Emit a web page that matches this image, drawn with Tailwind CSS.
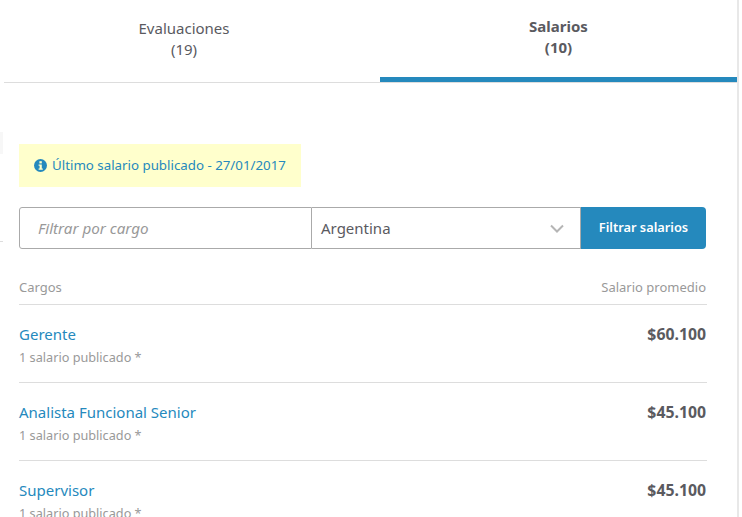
<!DOCTYPE html>
<html lang="es">
<head>
  <meta charset="UTF-8">
  <title>Salarios</title>
  <script src="https://cdn.jsdelivr.net/npm/@tailwindcss/browser@4"></script>
</head>
<body class="bg-white overflow-hidden font-['Noto_Sans',sans-serif] text-[#5a5a5f]">

<div class="relative w-[742px] h-[517px] overflow-hidden">
  <!-- restos de la columna vecina -->
  <div class="absolute left-0 top-[132px] w-[3px] h-[22px] bg-[#f7f7f7]"></div>
  <div class="absolute left-0 top-[241px] w-[3px] h-px bg-[#dddddd]"></div>

  <div class="w-[739px] h-[517px] border-r-2 border-[#e8e8e8]">
    <!-- tabs -->
    <div class="ml-[4px] flex h-[83px] border-b border-[#dddddd] text-[15px] leading-[21px] text-center">
      <div class="w-[360px] mr-[16px] pt-[18px]">Evaluaciones<br>(19)</div>
      <div class="w-[357px] h-[82px] pt-[16px] font-bold border-b-[5px] border-[#2589bd]">Salarios<br>(10)</div>
    </div>

    <div class="pl-[19px] pr-[30px]">
      <!-- aviso -->
      <div class="mt-[61px] w-[282px] h-[43px] bg-[#ffffcc] flex items-center pl-[15px] text-[13.3px] text-[#2589bd]">
        <svg class="w-[13px] h-[13px] mr-[5px] shrink-0 -mt-[1px]" viewBox="0 0 13 13">
          <circle cx="6.5" cy="6.5" r="6.5" fill="#2589bd"/>
          <rect x="5.4" y="2.2" width="2.4" height="2.2" fill="#ffffcc"/>
          <path d="M4.6 5.4h3.2v4h1v1.3H4.6V9.4h1V6.7h-1z" fill="#ffffcc"/>
        </svg>
        <span class="mt-px">Último salario publicado - 27/01/2017</span>
      </div>

      <!-- filtros -->
      <div class="mt-[20px] flex h-[42px] w-[687px]">
        <div class="w-[293px] shrink-0 border border-[#aaaaaa] rounded-l-[3px] flex items-center pl-[18px] pt-px text-[15.2px] italic text-[#999999]">Filtrar por cargo</div>
        <div class="w-[269px] shrink-0 border-y border-r border-[#aaaaaa] flex items-center justify-between pl-[9px] pr-[16px] text-[15px]">
          <span>Argentina</span>
          <svg class="w-[14px] h-[9px]" viewBox="0 0 14 9" fill="none" stroke="#b5b5b5" stroke-width="2"><path d="M1 1.5l6 6 6-6"/></svg>
        </div>
        <div class="w-[125px] shrink-0 bg-[#2589bd] rounded-r-[4px] flex items-center justify-center text-white text-[12.8px] font-semibold">Filtrar salarios</div>
      </div>

      <!-- tabla -->
      <div class="mt-[28px] flex justify-between h-[28px] pr-px border-b border-[#dddddd] text-[13px] leading-[20px] text-[#999999]">
        <span>Cargos</span>
        <span>Salario promedio</span>
      </div>

      <div class="h-[78px] pr-px border-b border-[#dddddd] flex justify-between pt-[18px]">
        <div>
          <div class="text-[15px] leading-[22px] text-[#2589bd]">Gerente</div>
          <div class="text-[12.7px] leading-[20px] mt-[2px] text-[#999999]">1 salario publicado *</div>
        </div>
        <div class="text-[15.8px] leading-[22px] font-bold">$60.100</div>
      </div>
      <div class="h-[78px] pr-px border-b border-[#dddddd] flex justify-between pt-[18px]">
        <div>
          <div class="text-[15px] leading-[22px] text-[#2589bd]">Analista Funcional Senior</div>
          <div class="text-[12.7px] leading-[20px] mt-[2px] text-[#999999]">1 salario publicado *</div>
        </div>
        <div class="text-[15.8px] leading-[22px] font-bold">$45.100</div>
      </div>
      <div class="h-[78px] pr-px flex justify-between pt-[18px]">
        <div>
          <div class="text-[15px] leading-[22px] text-[#2589bd]">Supervisor</div>
          <div class="text-[12.7px] leading-[20px] mt-[2px] text-[#999999]">1 salario publicado *</div>
        </div>
        <div class="text-[15.8px] leading-[22px] font-bold">$45.100</div>
      </div>
    </div>
  </div>
</div>

</body>
</html>
